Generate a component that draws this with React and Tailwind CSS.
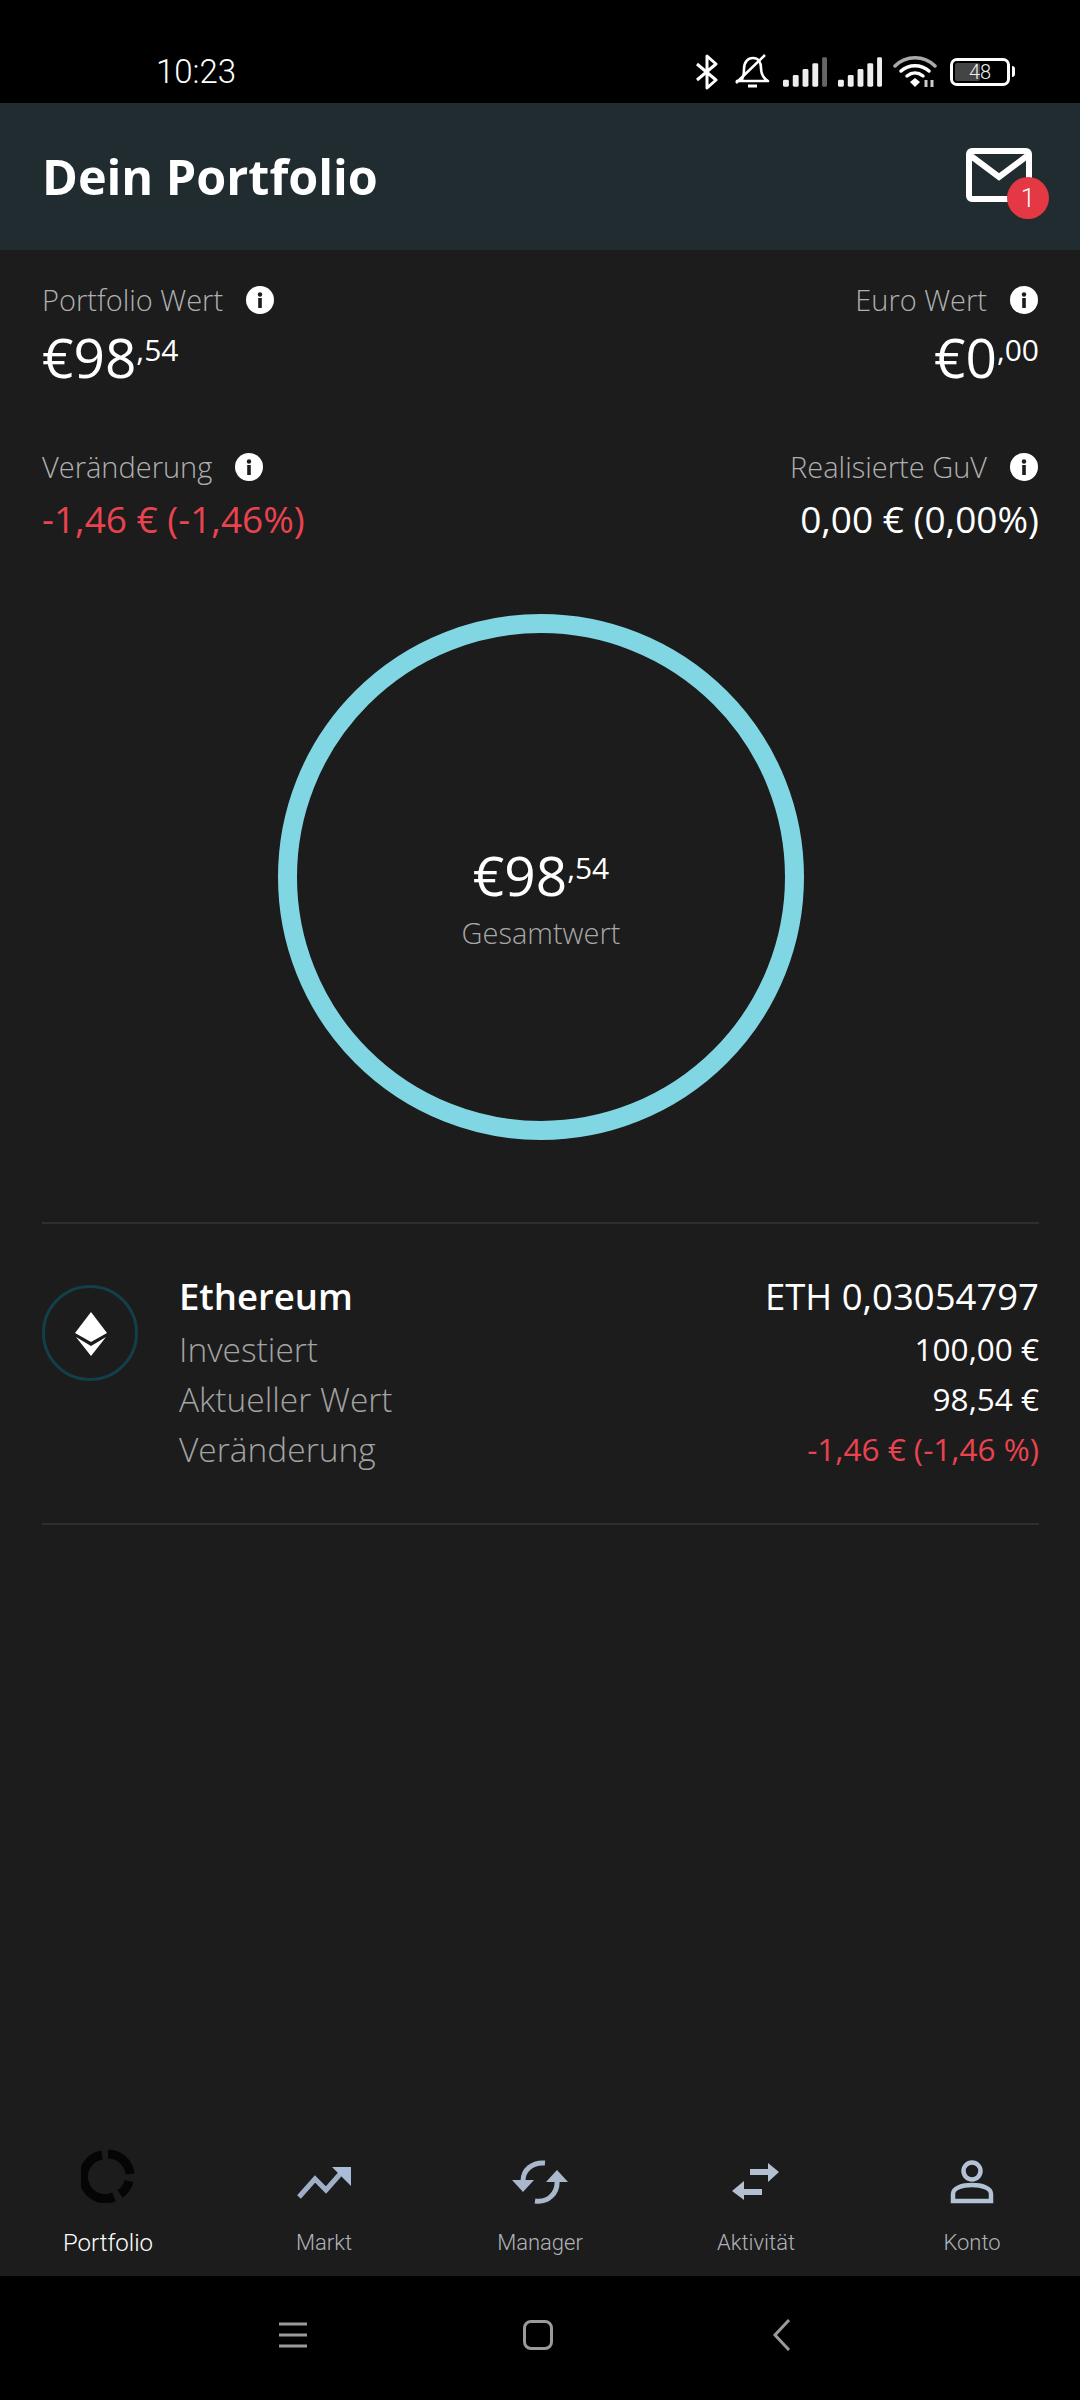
const sans = { fontFamily: '"Open Sans", sans-serif' };

function Info() {
  return (
    <svg width="28" height="28" viewBox="0 0 28 28" className="shrink-0">
      <circle cx="14" cy="14" r="14" fill="#fff" />
      <circle cx="14" cy="8.5" r="2.2" fill="#1c1c1c" />
      <rect x="12.2" y="12" width="3.6" height="10" fill="#1c1c1c" />
    </svg>
  );
}

function Money({ whole, cents }) {
  return (
    <div className="flex items-start text-white font-normal text-[55px] leading-[66px]">
      <span>€{whole}</span>
      <span className="text-[30px] leading-[36px] mt-[8px]">,{cents}</span>
    </div>
  );
}

function StatusIcons() {
  return (
    <div className="flex items-center ml-auto">
      <svg width="26" height="36" viewBox="0 0 26 36" fill="none" stroke="#fff" strokeWidth="3" className="mr-[14px] ml-[2px]">
        <path d="M3 10 L22 26 L13 34 V2 L22 10 L3 26" strokeLinejoin="round" />
      </svg>
      <svg width="36" height="38" viewBox="0 0 36 38" fill="none" stroke="#fff" strokeWidth="2.6" className="mr-[13px]">
        <path d="M7 28 C10 24 10 20 10 16 C10 9 14 5 19 5 C24 5 27 9 27 15 C27 21 29 25 34 28 H3 Z" strokeLinejoin="round" />
        <path d="M14 33 H23" strokeWidth="3" />
        <path d="M2 30 L31 2" />
      </svg>
      {[0, 1].map((s) => (
        <svg key={s} width="44" height="30" viewBox="0 0 45 30" className="mr-[11px]">
          <rect x="0" y="23" width="6" height="7" rx="1.5" fill="#eee" />
          <rect x="10" y="18" width="6" height="12" rx="1.5" fill="#eee" />
          <rect x="20" y="12" width="6" height="18" rx="1.5" fill="#eee" />
          <rect x="30" y="6" width="6" height="24" rx="1.5" fill="#eee" />
          <rect x="40" y="0" width="5" height="30" rx="1.5" fill={s === 0 ? "#666" : "#eee"} />
        </svg>
      ))}
      <svg width="44" height="32" viewBox="0 0 44 32" fill="none" className="mr-[13px]">
        <path d="M2 10 C13 -1 31 -1 42 10" stroke="#aaa" strokeWidth="3.5" strokeLinecap="round" />
        <path d="M8 15 C16 8 28 8 36 15" stroke="#fff" strokeWidth="3.5" strokeLinecap="round" />
        <path d="M14 20 C19 16 25 16 30 20" stroke="#fff" strokeWidth="3.5" strokeLinecap="round" />
        <path d="M17 26 L22 22 L27 26 L22 31 Z" fill="#fff" />
        <path d="M33 31 V24 M39 31 V24" stroke="#ccc" strokeWidth="3" />
      </svg>
      <div className="w-[60px] h-[28px] rounded-[7px] border-[3px] border-white relative flex items-center justify-center overflow-hidden">
        <div className="absolute left-[2px] top-[2px] bottom-[2px] w-[25px] bg-[#444] rounded-[2px]" />
        <span className="relative text-[#eee] text-[20px] leading-none" style={{ fontFamily: "Roboto, sans-serif", fontWeight: 300 }}>48</span>
      </div>
      <div className="w-[3px] h-[11px] bg-white rounded-r ml-[2px]" />
    </div>
  );
}

function Stat({ label, right, children, valueClass }) {
  return (
    <div className={`flex flex-col ${right ? "items-end" : "items-start"}`}>
      <div className={`flex items-center h-[36px] ${right ? "mr-[1px]" : ""}`}>
        <span className="text-[29px] font-light text-[#b0b0b0] leading-[36px]">{label}</span>
        <span className="ml-[23px]"><Info /></span>
      </div>
      <div className={valueClass}>{children}</div>
    </div>
  );
}

function Row({ label, value, valueClass = "text-white" }) {
  return (
    <div className="flex justify-between items-center h-[50px]">
      <span className="text-[33.5px] font-light text-[#a3a3a3] leading-[50px]">{label}</span>
      <span className={`text-[31.5px] font-normal leading-[50px] ${valueClass}`}>{value}</span>
    </div>
  );
}

const navIcons = {
  Portfolio: (
    <svg width="54" height="54" viewBox="0 0 54 54" fill="none" stroke="#050505" strokeWidth="9" className="-mt-[12px]">
      <path d="M27 5 A22 22 0 0 1 49 25" />
      <path d="M48 32 A22 22 0 0 1 39 45" />
      <path d="M33 48 A22 22 0 1 1 21 6" />
    </svg>
  ),
  Markt: (
    <svg width="54" height="36" viewBox="0 0 54 36" fill="none">
      <path d="M2 33 L18 15 L29 26 L44 9" stroke="#9fb0c6" strokeWidth="5" />
      <path d="M35 3 H54 V22 Z" fill="#a9bdd6" />
    </svg>
  ),
  Manager: (
    <svg width="56" height="46" viewBox="0 0 56 46" fill="none" stroke="#aab8cc" strokeWidth="5">
      <path d="M11 22 C11 11 20 3 33 4" />
      <path d="M45 22 C46 34 36 44 23 42" />
      <path d="M0 21 H22 L11 33 Z" fill="#aab8cc" stroke="none" />
      <path d="M34 23 H56 L45 11 Z" fill="#aab8cc" stroke="none" />
    </svg>
  ),
  Aktivität: (
    <svg width="48" height="38" viewBox="0 0 48 38" fill="#b3c0d2">
      <rect x="18" y="6" width="20" height="6" />
      <path d="M36 0 L47 9 L36 19 Z" />
      <rect x="10" y="26" width="20" height="6" />
      <path d="M12 18 L0 28 L12 37 Z" />
    </svg>
  ),
  Konto: (
    <svg width="44" height="44" viewBox="0 0 44 44" fill="none" stroke="#b5c2d6" strokeWidth="4.5">
      <circle cx="22" cy="11" r="8.5" />
      <path d="M3 41 V34 C3 28 12 25 22 25 C32 25 41 28 41 34 V41 Z" />
    </svg>
  ),
};

function Tab({ name, active }) {
  return (
    <div className="flex-1 flex flex-col items-center pt-[20px]">
      <div className="h-[64px] flex items-center justify-center">{navIcons[name]}</div>
      <span
        className={`leading-[30px] mt-[14px] ${active ? "text-white text-[24px]" : "text-[#aeb2b8] text-[22px]"}`}
        style={{ fontFamily: "Roboto, sans-serif", fontWeight: 300 }}
      >
        {name}
      </span>
    </div>
  );
}

export default function App() {
  return (
    <div className="w-[1080px] h-[2400px] flex flex-col bg-[#1c1c1c] overflow-hidden" style={sans}>
      <div className="h-[103px] bg-black flex items-center pl-[156px] pr-[65px] pt-[40px] shrink-0">
        <span className="text-[33px] text-white leading-none" style={{ fontFamily: "Roboto, sans-serif", fontWeight: 300 }}>10:23</span>
        <StatusIcons />
      </div>

      <div className="h-[147px] bg-[#212c31] flex items-center justify-between pl-[42px] pr-[44px] shrink-0">
        <h1 className="text-[48.5px] font-bold text-white leading-none">Dein Portfolio</h1>
        <div className="relative w-[70px] h-[58px]">
          <svg width="66" height="54" viewBox="0 0 66 54" fill="none" stroke="#fff" strokeWidth="6" className="absolute left-0 top-0">
            <rect x="3" y="3" width="60" height="48" rx="3" />
            <path d="M5 8 L33 29 L61 8" />
          </svg>
          <div className="absolute left-[41px] top-[29px] w-[42px] h-[42px] rounded-full bg-[#e53845] flex items-center justify-center text-white text-[26px] leading-none" style={{ fontFamily: "Roboto, sans-serif", fontWeight: 300 }}>1</div>
        </div>
      </div>

      <div className="pl-[42px] pr-[41px] pt-[32px] flex justify-between items-start h-[199px] shrink-0">
        <Stat label="Portfolio Wert" valueClass="mt-[6px]"><Money whole="98" cents="54" /></Stat>
        <Stat label="Euro Wert" right valueClass="mt-[6px]"><Money whole="0" cents="00" /></Stat>
      </div>
      <div className="pl-[42px] pr-[41px] flex justify-between items-start shrink-0">
        <Stat label="Veränderung" valueClass="text-[37px] leading-[46px] mt-[11px] text-[#e8434f]">-1,46 € (-1,46%)</Stat>
        <Stat label="Realisierte GuV" right valueClass="text-[37px] leading-[46px] mt-[11px] text-white">0,00 € (0,00%)</Stat>
      </div>

      <div className="flex justify-center mt-[72px] pl-[2px] shrink-0">
        <div className="w-[526px] h-[526px] rounded-full border-[19px] border-[#81d6e3] flex flex-col items-center justify-center">
          <div className="flex items-start text-white text-[55px] leading-[66px] mt-[38px]">
            <span>€98</span>
            <span className="text-[30px] leading-[36px] mt-[8px]">,54</span>
          </div>
          <span className="text-[29px] font-light text-[#a8a8a8] leading-[36px] mt-[7px]">Gesamtwert</span>
        </div>
      </div>

      <div className="ml-[42px] mr-[41px] mt-[82px] border-t-2 border-b-2 border-[#2e2e2e] h-[303px] flex items-start pt-[47px] shrink-0">
        <div className="w-[96px] h-[96px] rounded-full border-[3px] border-[#123f48] flex items-center justify-center mt-[14px] shrink-0 pl-[2px] pt-[2px]">
          <svg width="32" height="44" viewBox="0 0 32 44" fill="#fff">
            <path d="M16 0 L32 21 L16 30 L0 21 Z" />
            <path d="M1 25 L16 34 L31 25 L16 44 Z" />
          </svg>
        </div>
        <div className="flex-1 ml-[41px] flex flex-col">
          <div className="flex justify-between items-center h-[50px]">
            <span className="text-[36.5px] font-semibold text-white leading-[50px]">Ethereum</span>
            <span className="text-[36.5px] font-normal text-white leading-[50px]">ETH 0,03054797</span>
          </div>
          <div className="mt-[3px]">
            <Row label="Investiert" value="100,00 €" />
            <Row label="Aktueller Wert" value="98,54 €" />
            <Row label="Veränderung" value="-1,46 € (-1,46 %)" valueClass="text-[#e8434f]" />
          </div>
        </div>
      </div>

      <div className="flex-1" />

      <div className="h-[146px] flex shrink-0">
        {["Portfolio", "Markt", "Manager", "Aktivität", "Konto"].map((n, i) => (
          <Tab key={n} name={n} active={i === 0} />
        ))}
      </div>

      <div className="h-[124px] bg-black flex items-center justify-center shrink-0 pb-[6px] pr-[10px]">
        <svg width="30" height="28" viewBox="0 0 30 28" stroke="#9a9a9a" strokeWidth="3" className="mr-[215px]">
          <path d="M1 3 H29 M1 14 H29 M1 25 H29" />
        </svg>
        <div className="w-[30px] h-[30px] rounded-[8px] border-[3px] border-[#9a9a9a]" />
        <svg width="20" height="32" viewBox="0 0 20 32" fill="none" stroke="#9a9a9a" strokeWidth="3" className="ml-[219px]">
          <path d="M17 1 L3 16 L17 31" />
        </svg>
      </div>
    </div>
  );
}
